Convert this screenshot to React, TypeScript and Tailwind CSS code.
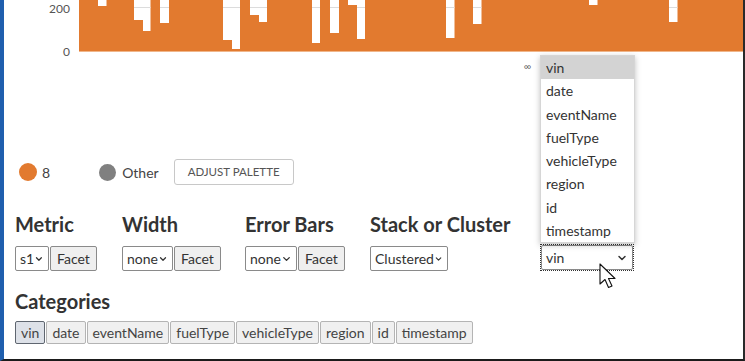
import { ChevronDown } from "lucide-react";

const ORANGE = "#e27a2f";

// white gaps above bars: [x, width, depth]
const GAPS: [number, number, number][] = [
  [97, 8.5, 6],
  [133, 9, 20],
  [142, 7.5, 31],
  [159, 9, 23],
  [222, 9, 40],
  [231, 8, 49],
  [249, 9, 15],
  [258, 8, 22],
  [311, 8, 43],
  [329, 9, 33],
  [347, 9, 5],
  [356, 8, 39],
  [445, 8.5, 38],
  [472, 8.5, 24],
  [588, 8.5, 5],
  [668, 8.5, 22],
];

const CATEGORIES = ["vin", "date", "eventName", "fuelType", "vehicleType", "region", "id", "timestamp"];

function Chart() {
  return (
    <div className="relative flex h-[53px]">
      <div className="relative w-[75px] shrink-0 text-[12px] text-[#555]">
        <span className="absolute right-[9px] top-[0px]">200</span>
        <span className="absolute right-[9px] top-[43px]">0</span>
      </div>
      <svg width="665" height="53" className="block">
        <rect x="0" y="0" width="665" height="51" fill={ORANGE} />
        {GAPS.map(([x, w, d], i) => (
          <g key={i}>
            <rect x={x - 78} y="0" width={w} height={d} fill="#ffffff" />
            {d > 7 && <line x1={x - 78} x2={x - 78 + w} y1="7.5" y2="7.5" stroke="#dcdcdc" strokeWidth="1" />}
          </g>
        ))}
        <line x1="0" x2="665" y1="51.5" y2="51.5" stroke="#f0b68a" strokeWidth="1" />
      </svg>
    </div>
  );
}

function Select({ value, width }: { value: string; width: string }) {
  return (
    <div
      className={`flex h-[25px] items-center justify-between rounded-[2px] border border-[#8a8a8a] bg-white pl-[4px] pr-[4px] text-[14px] text-[#333] ${width}`}
    >
      <span>{value}</span>
      <ChevronDown className="h-[12px] w-[12px] text-[#333]" strokeWidth={3} />
    </div>
  );
}

function Facet() {
  return (
    <button className="h-[25px] rounded-[2px] border border-[#8a8a8a] bg-[#efefef] px-[6px] text-[14px] text-[#333]">
      Facet
    </button>
  );
}

function Heading({ children }: { children: React.ReactNode }) {
  return <h2 className="h-[24px] text-[20px] font-bold leading-[24px] text-[#333]">{children}</h2>;
}

export default function App() {
  return (
    <div
      className="relative h-[361px] w-[745px] overflow-hidden border-b-2 border-l-[4px] border-r-2 border-b-[#1b1b1b] border-l-[#1f5fae] border-r-[#2a2a2a] bg-white"
      style={{ fontFamily: "Lato, 'Liberation Sans', sans-serif" }}
    >
      <Chart />

      <div className="pl-[11px]">
        {/* legend */}
        <div className="mt-[106px] flex h-[26px] items-center text-[14px] text-[#444]">
          <span className="ml-[4px] h-[18px] w-[18px] rounded-full" style={{ background: ORANGE }} />
          <span className="ml-[5px]">8</span>
          <span className="ml-[49px] h-[17px] w-[17px] rounded-full bg-[#808080]" />
          <span className="ml-[6px]">Other</span>
          <button className="ml-[15px] h-[26px] rounded-[3px] border border-[#c8c8c8] bg-white px-[13px] text-[11.5px] text-[#555]">
            ADJUST PALETTE
          </button>
        </div>

        {/* controls */}
        <div className="mt-[27px] flex">
          <div className="w-[107px]">
            <Heading>Metric</Heading>
            <div className="mt-[10px] flex gap-[1px]">
              <Select value="s1" width="w-[34px]" />
              <Facet />
            </div>
          </div>
          <div className="w-[123px]">
            <Heading>Width</Heading>
            <div className="mt-[10px] flex gap-[1px]">
              <Select value="none" width="w-[51px]" />
              <Facet />
            </div>
          </div>
          <div className="w-[125px]">
            <Heading>Error Bars</Heading>
            <div className="mt-[10px] flex gap-[1px]">
              <Select value="none" width="w-[52px]" />
              <Facet />
            </div>
          </div>
          <div className="w-[171px]">
            <Heading>Stack or Cluster</Heading>
            <div className="mt-[10px] flex">
              <Select value="Clustered" width="w-[78px]" />
            </div>
          </div>
          <div>
            <div className="h-[24px]" />
            <div className="mt-[9px] outline-1 outline-offset-0 outline-dotted outline-[#333]">
              <Select value="vin" width="w-[92px]" />
            </div>
          </div>
        </div>

        {/* categories */}
        <div className="mt-[18px]">
          <Heading>Categories</Heading>
          <div className="mt-[8px] flex gap-[1px]">
            {CATEGORIES.map((c, i) => (
              <span
                key={c}
                className={
                  i === 0
                    ? "flex h-[23px] items-center rounded-[2px] border border-[#5f6670] bg-[#dde1e8] px-[5px] text-[14px] text-[#444]"
                    : "flex h-[23px] items-center rounded-[2px] border border-[#b4b4b4] bg-[#f0f0f0] px-[5px] text-[14px] text-[#444]"
                }
              >
                {c}
              </span>
            ))}
          </div>
        </div>
      </div>

      {/* open select menu */}
      <span className="absolute left-[520px] top-[59px] text-[10px] text-[#666]">∞</span>
      <div className="absolute left-[536px] top-[55px] w-[95px] border border-[#d6d6d6] bg-white text-[14px] text-[#333] shadow-[0_2px_6px_rgba(0,0,0,0.25)]">
        {CATEGORIES.map((c, i) => (
          <div key={c} className={`h-[23.25px] pl-[5px] leading-[23.25px] ${i === 0 ? "bg-[#d3d3d3]" : ""}`}>
            {c}
          </div>
        ))}
      </div>

      {/* mouse pointer */}
      <svg className="absolute left-[595px] top-[263px]" width="20" height="28" viewBox="0 0 20 28">
        <path
          d="M1 1 L1 21 L6 16.5 L9.5 24.5 L13 23 L9.5 15.5 L16 15.5 Z"
          fill="#ffffff"
          stroke="#111"
          strokeWidth="1.1"
          strokeLinejoin="round"
        />
      </svg>
    </div>
  );
}
